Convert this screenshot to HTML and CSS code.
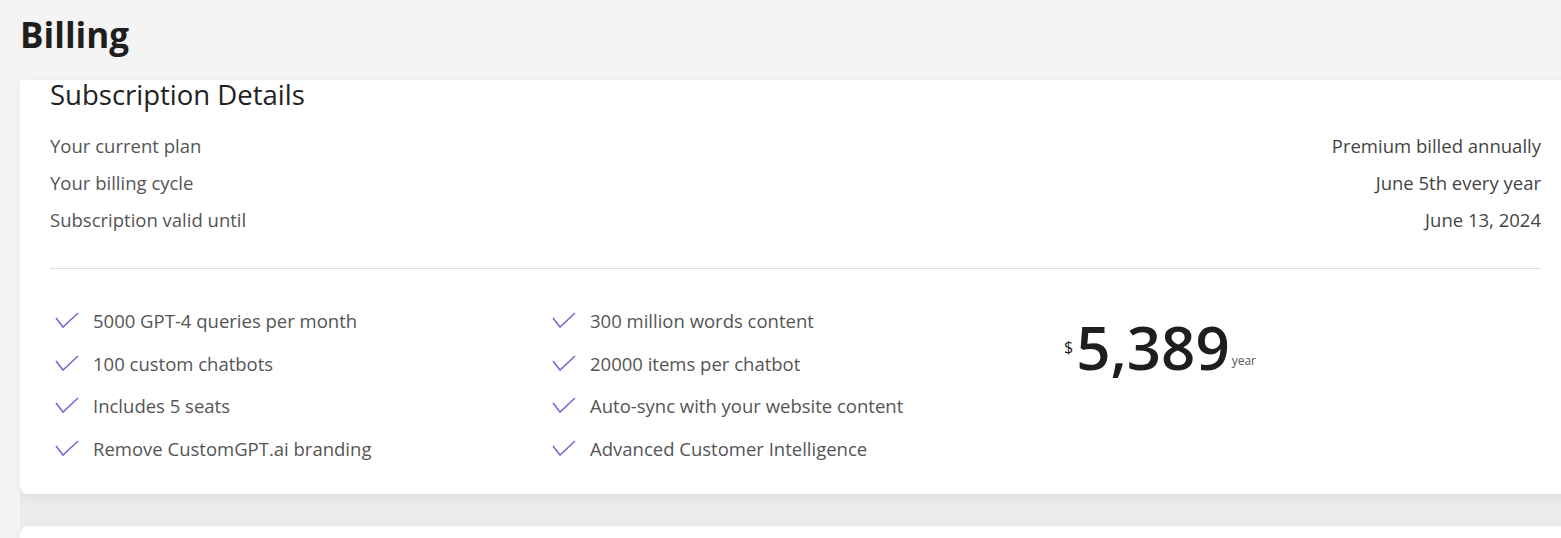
FILE: index.html
```html
<!DOCTYPE html>
<html lang="en">

<head>
    <meta charset="UTF-8">
    <meta name="viewport" content="width=device-width, initial-scale=1.0">
    <title>Billing</title>
    <link rel="stylesheet" href="styles.css">
</head>

<body>
    <header class="page-header">
        <h1>Billing</h1>
    </header>

    <main class="page-body">
        <section class="card">
            <h2>Subscription Details</h2>

            <div class="details">
                <div class="detail-row">
                    <span>Your current plan</span>
                    <span class="value">Premium billed annually</span>
                </div>
                <div class="detail-row">
                    <span>Your billing cycle</span>
                    <span class="value">June 5th every year</span>
                </div>
                <div class="detail-row">
                    <span>Subscription valid until</span>
                    <span class="value">June 13, 2024</span>
                </div>
            </div>

            <hr class="divider">

            <div class="plan">
                <ul class="features">
                    <li><svg class="check" viewBox="0 0 24 18"><path d="M1 6 L8 15 L23 1" /></svg>5000 GPT-4 queries per month</li>
                    <li><svg class="check" viewBox="0 0 24 18"><path d="M1 6 L8 15 L23 1" /></svg>100 custom chatbots</li>
                    <li><svg class="check" viewBox="0 0 24 18"><path d="M1 6 L8 15 L23 1" /></svg>Includes 5 seats</li>
                    <li><svg class="check" viewBox="0 0 24 18"><path d="M1 6 L8 15 L23 1" /></svg>Remove CustomGPT.ai branding</li>
                </ul>
                <ul class="features">
                    <li><svg class="check" viewBox="0 0 24 18"><path d="M1 6 L8 15 L23 1" /></svg>300 million words content</li>
                    <li><svg class="check" viewBox="0 0 24 18"><path d="M1 6 L8 15 L23 1" /></svg>20000 items per chatbot</li>
                    <li><svg class="check" viewBox="0 0 24 18"><path d="M1 6 L8 15 L23 1" /></svg>Auto-sync with your website content</li>
                    <li><svg class="check" viewBox="0 0 24 18"><path d="M1 6 L8 15 L23 1" /></svg>Advanced Customer Intelligence</li>
                </ul>
                <div class="price"><span class="currency">$</span><span class="amount">5,389</span><span class="period">year</span></div>
            </div>
        </section>

        <section class="card next-card"></section>
    </main>
</body>

</html>
```

FILE: styles.css
```css
html, body {
    margin: 0;
    padding: 0;
    overflow: hidden;
}

body {
    font-family: 'Open Sans', 'Noto Sans', sans-serif;
    background-color: #f4f4f4;
    color: #222222;
    height: 538px;
}

.page-header {
    height: 80px;
    padding-left: 20px;
    box-sizing: border-box;
}

.page-header h1 {
    margin: 0;
    padding-top: 10px;
    font-size: 35px;
    font-weight: 700;
    line-height: 50px;
    color: #1e1e1e;
}

.page-body {
    margin-left: 20px;
    background-color: #ebebeb;
    height: 458px;
}

.card {
    background-color: #ffffff;
    margin-right: -10px;
    padding: 0 30px 24px 30px;
    border-radius: 0 0 8px 8px;
    box-shadow: 0 3px 10px rgba(0, 0, 0, 0.06);
}

.card h2 {
    margin: 0;
    font-size: 27.5px;
    font-weight: 500;
    line-height: 30px;
    color: #222222;
}

.details {
    margin-top: 17px;
}

.detail-row {
    display: flex;
    justify-content: space-between;
    font-size: 18.5px;
    line-height: 37px;
    color: #555555;
}

.detail-row .value {
    color: #444444;
}

.divider {
    border: none;
    border-top: 1px solid #dddddd;
    margin: 30px 0 0 0;
}

.plan {
    display: grid;
    grid-template-columns: 1fr 1fr 1fr;
    padding-top: 31px;
}

.features {
    list-style: none;
    margin: 0;
    padding: 0;
}

.features li {
    display: flex;
    align-items: center;
    font-size: 18.5px;
    line-height: 42.5px;
    color: #555555;
}

.check {
    width: 24px;
    height: 18px;
    margin: 0 14px 0 5px;
    fill: none;
    stroke: #7b68d6;
    stroke-width: 1.6;
}

.price {
    align-self: start;
    padding-left: 20px;
    padding-top: 15px;
    line-height: 64px;
    color: #1e1e1e;
}

.currency {
    font-size: 16px;
    vertical-align: 17px;
    margin-right: 3px;
}

.amount {
    font-size: 60px;
    font-weight: 600;
}

.period {
    font-size: 12px;
    color: #555555;
    vertical-align: 5px;
    margin-left: 2px;
}

.next-card {
    margin-top: 32px;
    height: 40px;
    border-radius: 8px 8px 0 0;
}
```
